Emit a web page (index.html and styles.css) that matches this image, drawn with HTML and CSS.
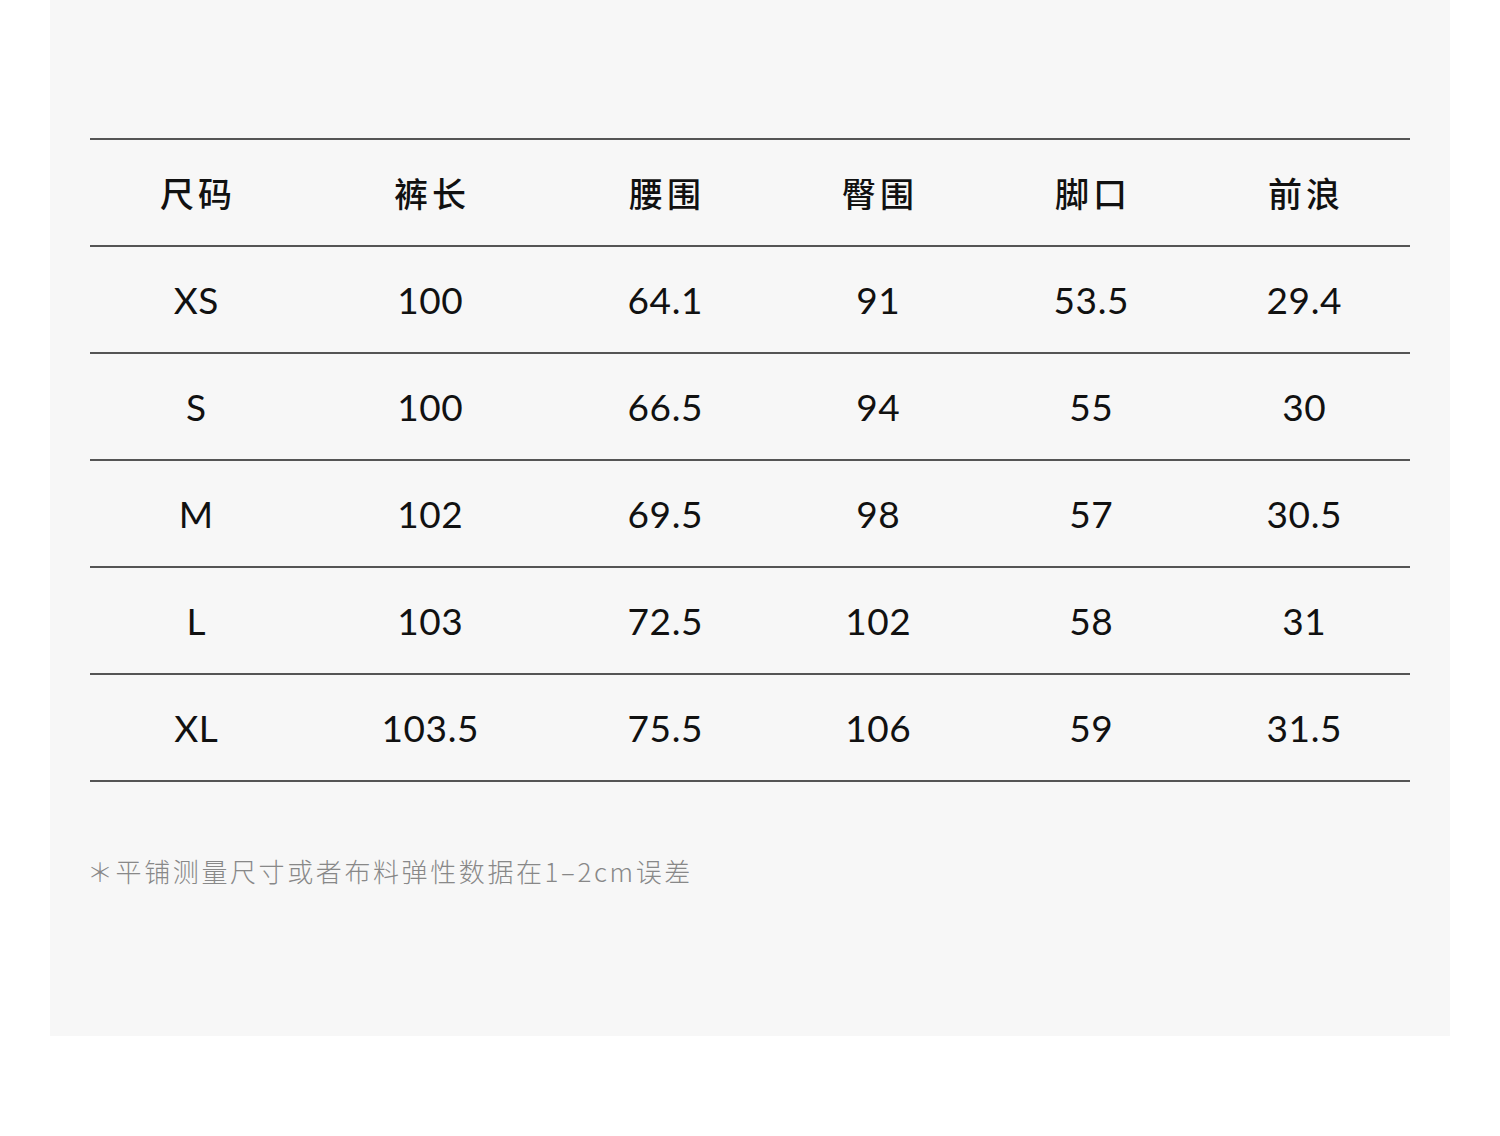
FILE: index.html
```html
<!DOCTYPE html>
<html lang="zh">
<head>
<meta charset="utf-8">
<link rel="stylesheet" href="styles.css">
</head>
<body>
<div class="panel">
  <div class="table">
    <div class="row head">
      <div>尺码</div><div>裤长</div><div>腰围</div><div>臀围</div><div>脚口</div><div>前浪</div>
    </div>
    <div class="row">
      <div>XS</div><div>100</div><div>64.1</div><div>91</div><div>53.5</div><div>29.4</div>
    </div>
    <div class="row">
      <div>S</div><div>100</div><div>66.5</div><div>94</div><div>55</div><div>30</div>
    </div>
    <div class="row">
      <div>M</div><div>102</div><div>69.5</div><div>98</div><div>57</div><div>30.5</div>
    </div>
    <div class="row">
      <div>L</div><div>103</div><div>72.5</div><div>102</div><div>58</div><div>31</div>
    </div>
    <div class="row">
      <div>XL</div><div>103.5</div><div>75.5</div><div>106</div><div>59</div><div>31.5</div>
    </div>
  </div>
  <p class="note">＊平铺测量尺寸或者布料弹性数据在1–2cm误差</p>
</div>
</body>
</html>
```
FILE: styles.css
```css
html, body {
  margin: 0;
  padding: 0;
  background: #ffffff;
}
body {
  width: 1500px;
  height: 1136px;
  font-family: Lato, "Noto Sans CJK SC", sans-serif;
}
.panel {
  margin-left: 50px;
  width: 1400px;
  height: 1036px;
  background: #f7f7f7;
  padding: 138px 40px 0;
  box-sizing: border-box;
}
.table {
  border-top: 2px solid #555555;
}
.row {
  display: grid;
  grid-template-columns: 212px 256px 214px 212px 214px 212px;
  height: 105px;
  border-bottom: 2px solid #555555;
  align-items: center;
  text-align: center;
  font-size: 37px;
  letter-spacing: 0.6px;
  color: #111111;
}
.row > div {
  padding-left: 0.6px;
}
.row.head {
  font-family: "Noto Sans CJK SC", sans-serif;
  font-weight: 500;
  font-size: 34px;
  letter-spacing: 4px;
  color: #111111;
}
.row.head > div {
  padding-left: 4px;
}
.note {
  margin: 72px 0 0 -3px;
  font-family: "Noto Sans CJK SC", sans-serif;
  font-weight: 300;
  font-size: 26px;
  letter-spacing: 2.6px;
  line-height: 34px;
  color: #888888;
}
```
